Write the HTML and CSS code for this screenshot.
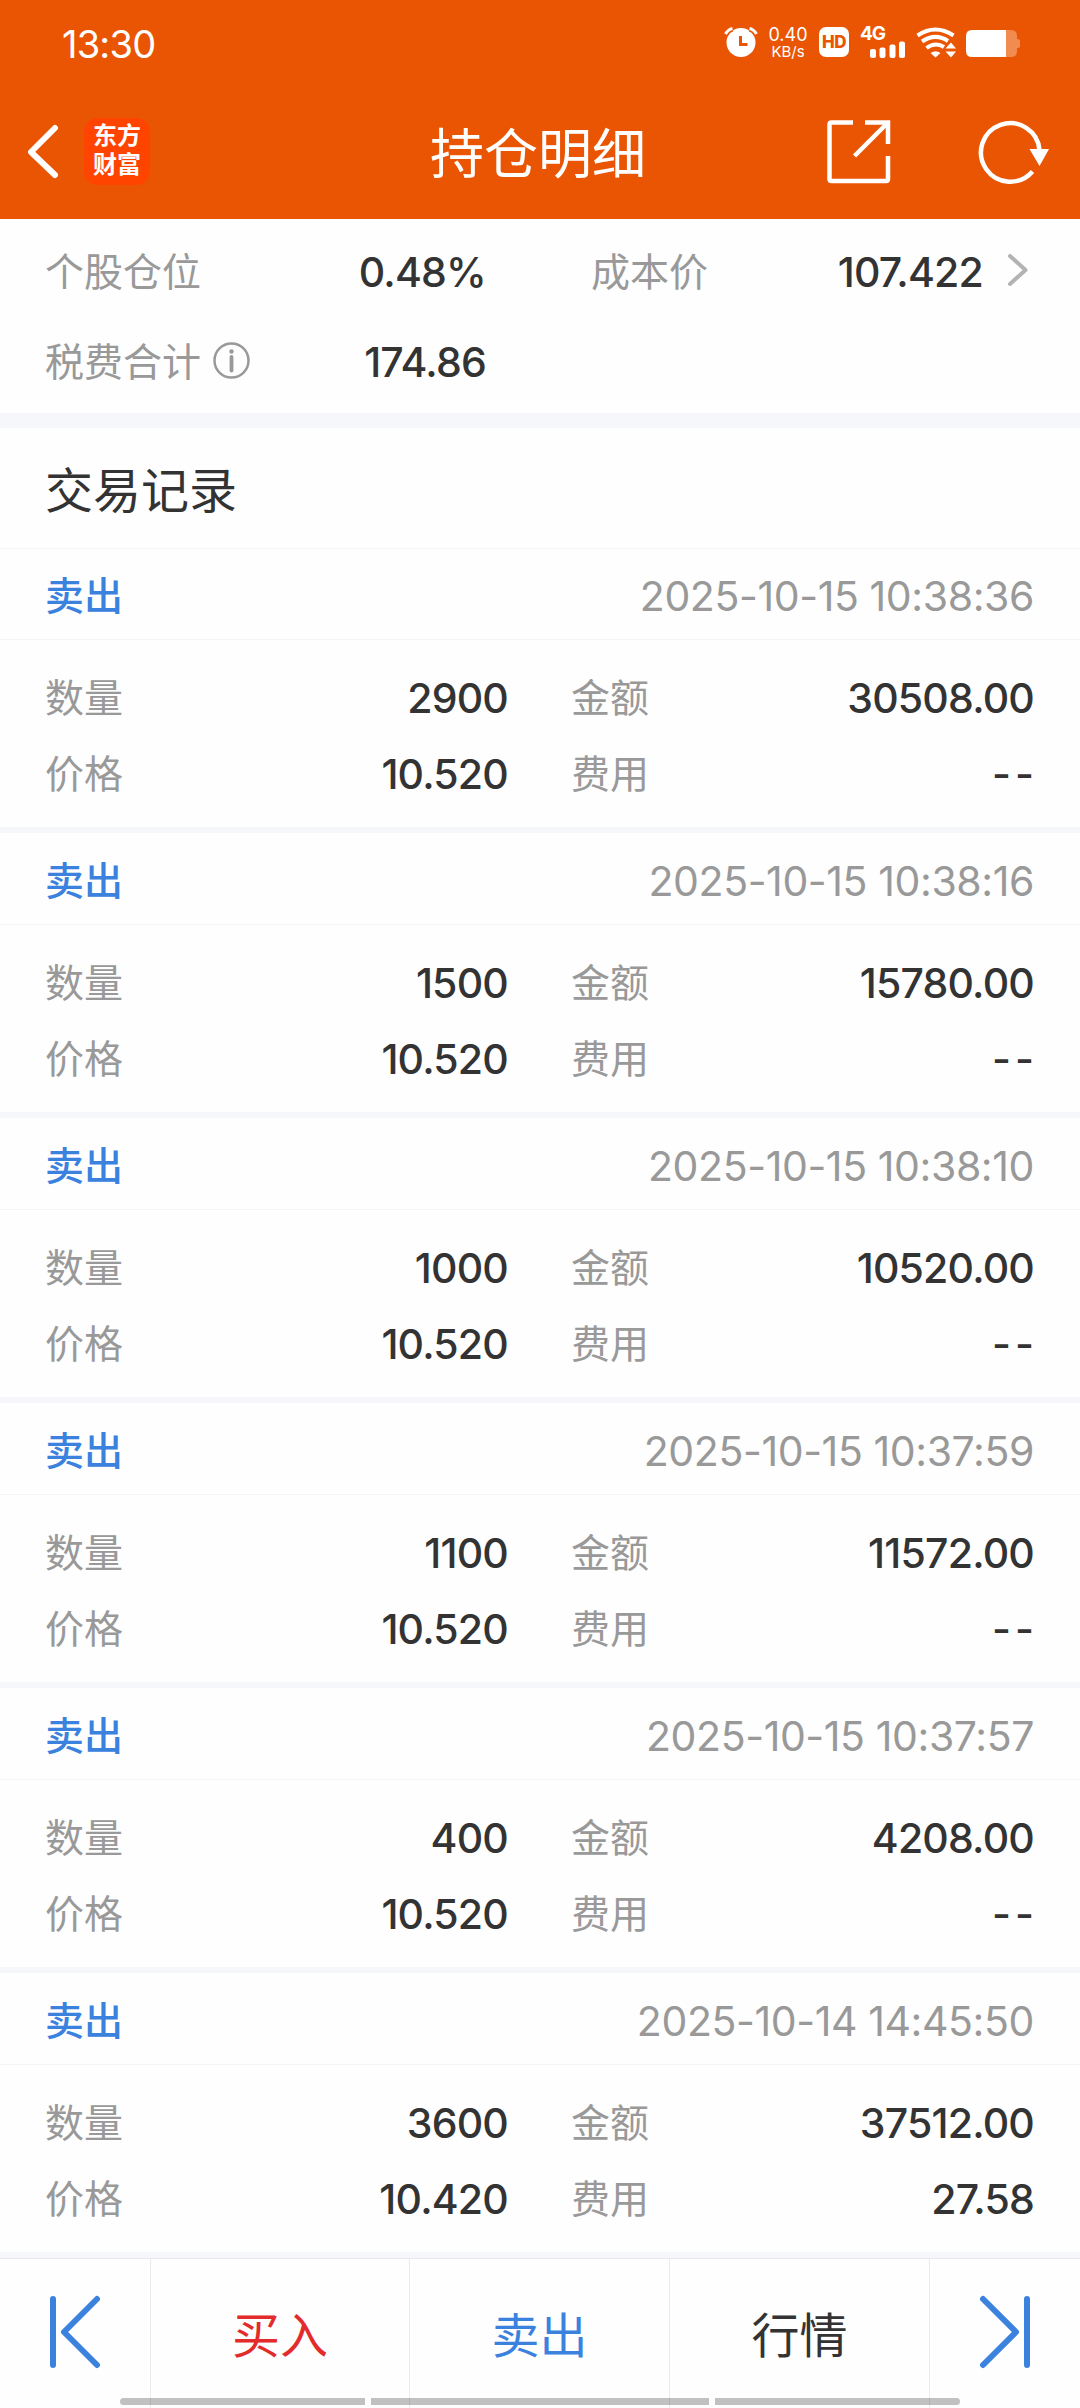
FILE: index.html
```html
<!DOCTYPE html>
<html lang="zh-CN">
<head>
    <meta charset="UTF-8">
    <meta name="viewport" content="width=device-width, initial-scale=1.0">
    <title>持仓明细</title>

    <link rel="stylesheet" href="styles.css">
</head>
<body>

    <header>
        <div class="status">
            <span class="time">13:30</span>
            <svg class="alarm" width="34" height="30" viewBox="0 0 34 30">
                <circle cx="17" cy="15.500" r="14.500" fill="#fff"/>
                <path d="M1.500 7Q4 2.500 8.500 1.500M32.500 7Q30 2.500 25.500 1.500" fill="none" stroke="#ea5504" stroke-width="6"/>
                <path d="M1.500 7Q4 2.500 8.500 1.500M32.500 7Q30 2.500 25.500 1.500" fill="none" stroke="#fff" stroke-width="3"/>
                <path d="M16.500 9v8.500h7" fill="none" stroke="#ea5504" stroke-width="3"/>
            </svg>
            <div class="speed"><span>0.40</span><span class="unit">KB/s</span></div>
            <div class="hd">HD</div>
            <div class="signal">
                <span>4G</span>
                <svg width="36" height="17" viewBox="0 0 36 17" fill="#fff">
                    <rect x="0" y="8" width="6" height="9" rx="2"/>
                    <rect x="9.500" y="6.500" width="6" height="10.500" rx="2"/>
                    <rect x="19.500" y="3.500" width="6" height="13.500" rx="2"/>
                    <rect x="29" y="0.500" width="6" height="16.500" rx="2"/>
                </svg>
            </div>
            <svg class="wifi" width="40" height="31" viewBox="0 0 40 31">
                <g fill="none" stroke="#fff" stroke-width="4">
                    <path d="M1.500 8.500Q19.500-3.500 37.500 8.500"/>
                    <path d="M6 14.500Q19.500 5.500 32 14"/>
                    <path d="M10.500 21Q19.500 14.500 28 20"/>
                </g>
                <path d="M14.500 26Q19.500 22.500 24.500 26L19.500 30.500z" fill="#fff"/>
                <path d="M29.500 21.500L35 15.500L40 21.500zM29.500 24.500L35 30.500L40 24.500z" fill="#fff"/>
            </svg>
            <svg class="battery" width="54" height="27" viewBox="0 0 54 27">
                <path d="M40 0h5q6 0 6 6v3q3 0 3 2v5q0 2-3 2v3q0 6-6 6h-5z" fill="#f28b50"/>
                <path d="M6 0H40V27H6Q0 27 0 21V6Q0 0 6 0z" fill="#fff"/>
            </svg>
        </div>
        <div class="navbar">
            <div class="nav-left">
                <svg width="34" height="56" viewBox="0 0 34 56" fill="none" stroke="#fff" stroke-width="6" stroke-linecap="round" stroke-linejoin="round">
                    <path d="M29 4L5 28L29 51"/>
                </svg>
                <div class="logo">东方<br>财富</div>
            </div>
            <h1>持仓明细</h1>
            <div class="nav-right">
                <svg width="64" height="64" viewBox="0 0 64 64" fill="none" stroke="#fff" stroke-width="4.500">
                    <path d="M26 2.500H4.500Q2.500 2.500 2.500 4.500V59Q2.500 61 4.500 61H59Q61 61 61 59V36"/>
                    <path d="M38 2.500H61V24M61 2.500L27.500 36"/>
                </svg>
                <svg width="72" height="64" viewBox="0 0 72 64">
                    <path d="M54.500 51.500A29.300 29.300 0 1 1 61.500 30" fill="none" stroke="#fff" stroke-width="4.500"/>
                    <path d="M51.500 29H71L61.500 46z" fill="#fff"/>
                </svg>
            </div>
        </div>
    </header>

    <section class="summary">
        <div class="summary-row">
            <span class="label">个股仓位</span>
            <span class="value">0.48%</span>
            <span class="label cost">成本价</span>
            <span class="value">107.422</span>
            <svg class="more" width="22" height="34" viewBox="0 0 22 34" fill="none" stroke="#b3b3b3" stroke-width="4" stroke-linecap="round" stroke-linejoin="round">
                <path d="M3 2L18.500 16L3 30"/>
            </svg>
        </div>
        <div class="summary-row">
            <span class="label">税费合计
                <svg class="info" width="37" height="37" viewBox="0 0 37 37">
                    <circle cx="18.500" cy="18.500" r="17" fill="none" stroke="#999" stroke-width="2.500"/>
                    <circle cx="18.500" cy="9.500" r="2.200" fill="#999"/>
                    <path d="M18.500 15v13.500" stroke="#999" stroke-width="3.800" stroke-linecap="round"/>
                </svg>
            </span>
            <span class="value">174.86</span>
        </div>
    </section>

    <h2>交易记录</h2>

    <main>
        <div class="trade">
            <div class="trade-head"><span class="side">卖出</span><span class="date">2025-10-15 10:38:36</span></div>
            <div class="trade-body">
                <span class="label">数量</span><span class="value">2900</span>
                <span class="label">金额</span><span class="value">30508.00</span>
                <span class="label">价格</span><span class="value">10.520</span>
                <span class="label">费用</span><span class="value none">--</span>
            </div>
        </div>
        <div class="trade">
            <div class="trade-head"><span class="side">卖出</span><span class="date">2025-10-15 10:38:16</span></div>
            <div class="trade-body">
                <span class="label">数量</span><span class="value">1500</span>
                <span class="label">金额</span><span class="value">15780.00</span>
                <span class="label">价格</span><span class="value">10.520</span>
                <span class="label">费用</span><span class="value none">--</span>
            </div>
        </div>
        <div class="trade">
            <div class="trade-head"><span class="side">卖出</span><span class="date">2025-10-15 10:38:10</span></div>
            <div class="trade-body">
                <span class="label">数量</span><span class="value">1000</span>
                <span class="label">金额</span><span class="value">10520.00</span>
                <span class="label">价格</span><span class="value">10.520</span>
                <span class="label">费用</span><span class="value none">--</span>
            </div>
        </div>
        <div class="trade">
            <div class="trade-head"><span class="side">卖出</span><span class="date">2025-10-15 10:37:59</span></div>
            <div class="trade-body">
                <span class="label">数量</span><span class="value">1100</span>
                <span class="label">金额</span><span class="value">11572.00</span>
                <span class="label">价格</span><span class="value">10.520</span>
                <span class="label">费用</span><span class="value none">--</span>
            </div>
        </div>
        <div class="trade">
            <div class="trade-head"><span class="side">卖出</span><span class="date">2025-10-15 10:37:57</span></div>
            <div class="trade-body">
                <span class="label">数量</span><span class="value">400</span>
                <span class="label">金额</span><span class="value">4208.00</span>
                <span class="label">价格</span><span class="value">10.520</span>
                <span class="label">费用</span><span class="value none">--</span>
            </div>
        </div>
        <div class="trade">
            <div class="trade-head"><span class="side">卖出</span><span class="date">2025-10-14 14:45:50</span></div>
            <div class="trade-body">
                <span class="label">数量</span><span class="value">3600</span>
                <span class="label">金额</span><span class="value">37512.00</span>
                <span class="label">价格</span><span class="value">10.420</span>
                <span class="label">费用</span><span class="value">27.58</span>
            </div>
        </div>
    </main>

    <footer>
        <div class="tab">
            <svg width="52" height="74" viewBox="0 0 52 74" fill="none" stroke="#3a82de" stroke-width="6" stroke-linecap="round" stroke-linejoin="round">
                <path d="M4 4V70M48 4L15 37L48 70"/>
            </svg>
        </div>
        <div class="tab buy">买入</div>
        <div class="tab sell">卖出</div>
        <div class="tab">行情</div>
        <div class="tab">
            <svg width="52" height="74" viewBox="0 0 52 74" fill="none" stroke="#3a82de" stroke-width="6" stroke-linecap="round" stroke-linejoin="round">
                <path d="M48 4V70M4 4L37 37L4 70"/>
            </svg>
        </div>
        <div class="gesture"><i></i><i></i><i></i></div>
    </footer>

</body>
</html>
```
FILE: styles.css
```css
* {
    box-sizing: border-box;
}
body {
    margin: 0;
    width: 1080px;
    height: 2408px;
    overflow: hidden;
    background-color: #fefefe;
    color: #333;
    font-family: Inter, "Noto Sans CJK SC", sans-serif;
    font-size: 39px;
}
svg {
    display: block;
    flex: none;
}
header {
    height: 219px;
    background-color: #ea5504;
    color: #fff;
}
.status {
    display: flex;
    align-items: flex-start;
    height: 84px;
    padding: 27px 60px 0 62px;
}
.time {
    margin-right: auto;
    font-size: 38px;
    line-height: 34px;
    letter-spacing: -0.8px;
}
.speed {
    width: 42px;
    margin-top: -1px;
    margin-left: 9px;
    font-size: 18px;
    line-height: 17px;
    text-align: center;
}
.speed span {
    display: block;
}
.speed .unit {
    font-size: 15px;
}
.hd {
    width: 30px;
    height: 30px;
    margin-left: 10px;
    border-radius: 7px;
    background-color: #fff;
    color: #ea5504;
    font-size: 17px;
    font-weight: 800;
    line-height: 31px;
    letter-spacing: -0.5px;
    text-align: center;
}
.signal {
    width: 45px;
    margin-left: 11px;
    font-size: 19px;
    font-weight: 700;
    line-height: 14px;
    letter-spacing: -1px;
}
.signal span {
    display: block;
}
.signal svg {
    margin-left: 10px;
}
.wifi {
    margin-left: 11px;
}
.battery {
    margin-top: 3px;
    margin-left: 10px;
}
.navbar {
    display: grid;
    grid-template-columns: 1fr auto 1fr;
    align-items: center;
    height: 135px;
    padding: 0 30px 0 26px;
}
.nav-left, .nav-right {
    display: flex;
    align-items: center;
}
.nav-left {
    gap: 24px;
}
.nav-right {
    justify-content: flex-end;
    gap: 87px;
}
.logo {
    width: 66px;
    height: 67px;
    padding-top: 3px;
    border-radius: 14px;
    background-color: #ff4400;
    font-size: 24px;
    font-weight: 700;
    line-height: 29px;
    text-align: center;
}
h1 {
    margin: 0;
    padding-top: 6px;
    font-size: 54px;
    font-weight: 400;
    line-height: 80px;
}
.summary {
    height: 209px;
    padding-top: 7px;
    border-bottom: 15px solid #f6f7fa;
}
.summary-row {
    display: grid;
    grid-template-columns: 235px 206px 105px 1fr auto;
    align-items: center;
    height: 90px;
    padding: 0 51px 0 45px;
}
.label {
    display: flex;
    align-items: center;
    gap: 12px;
    padding-bottom: 4px;
    color: #999;
    white-space: nowrap;
}
.value {
    padding-top: 2px;
    font-size: 41px;
    font-weight: 500;
    letter-spacing: -0.8px;
    text-align: right;
}
.cost {
    width: 200px;
    margin-left: 105px;
}
.info {
    margin-top: 3px;
}
.more {
    margin-left: 24px;
}
h2 {
    margin: 0;
    height: 120px;
    padding: 3px 0 0 45px;
    font-size: 48px;
    font-weight: 400;
    line-height: 120px;
}
.trade {
    height: 285px;
    border-top: 1px solid #f5f5f7;
    border-bottom: 6px solid #f6f7fa;
}
.trade + .trade {
    border-top-color: transparent;
}
.trade-head {
    display: flex;
    align-items: center;
    justify-content: space-between;
    height: 91px;
    padding: 2px 46px 0 45px;
    border-bottom: 1px solid #f5f5f7;
}
.side {
    padding-bottom: 5px;
    color: #3a82de;
    font-weight: 500;
}
.date {
    padding-top: 2px;
    color: #999;
    font-size: 41px;
    letter-spacing: -0.4px;
}
.trade-body {
    display: grid;
    grid-template-columns: 100px 363px 163px 1fr;
    grid-auto-rows: 76px;
    align-items: center;
    padding: 19px 46px 0 45px;
}
.trade-body .label:nth-child(4n + 3) {
    padding-left: 63px;
}
.none {
    margin-right: -4px;
    letter-spacing: 4px;
}
footer {
    position: relative;
    display: grid;
    grid-template-columns: 151px 259px 260px 260px 150px;
    height: 150px;
    border-top: 1px solid #e8e8e8;
    background-color: #fefefe;
    font-size: 48px;
}
.tab {
    display: flex;
    align-items: center;
    justify-content: center;
    padding-bottom: 4px;
    border-right: 1px solid #ebebeb;
}
.tab:nth-child(5) {
    border-right: none;
}
.buy {
    color: #e32b2b;
}
.sell {
    color: #3a82de;
}
/* system navigation hint */
.gesture {
    position: absolute;
    left: 120px;
    bottom: 3px;
    display: grid;
    grid-template-columns: 245px 338px 245px;
    gap: 6px;
}
.gesture i {
    height: 7px;
    background-color: rgba(0, 0, 0, 0.24);
}
.gesture i:first-child {
    border-radius: 4px 0 0 4px;
}
.gesture i:last-child {
    border-radius: 0 4px 4px 0;
}
```
